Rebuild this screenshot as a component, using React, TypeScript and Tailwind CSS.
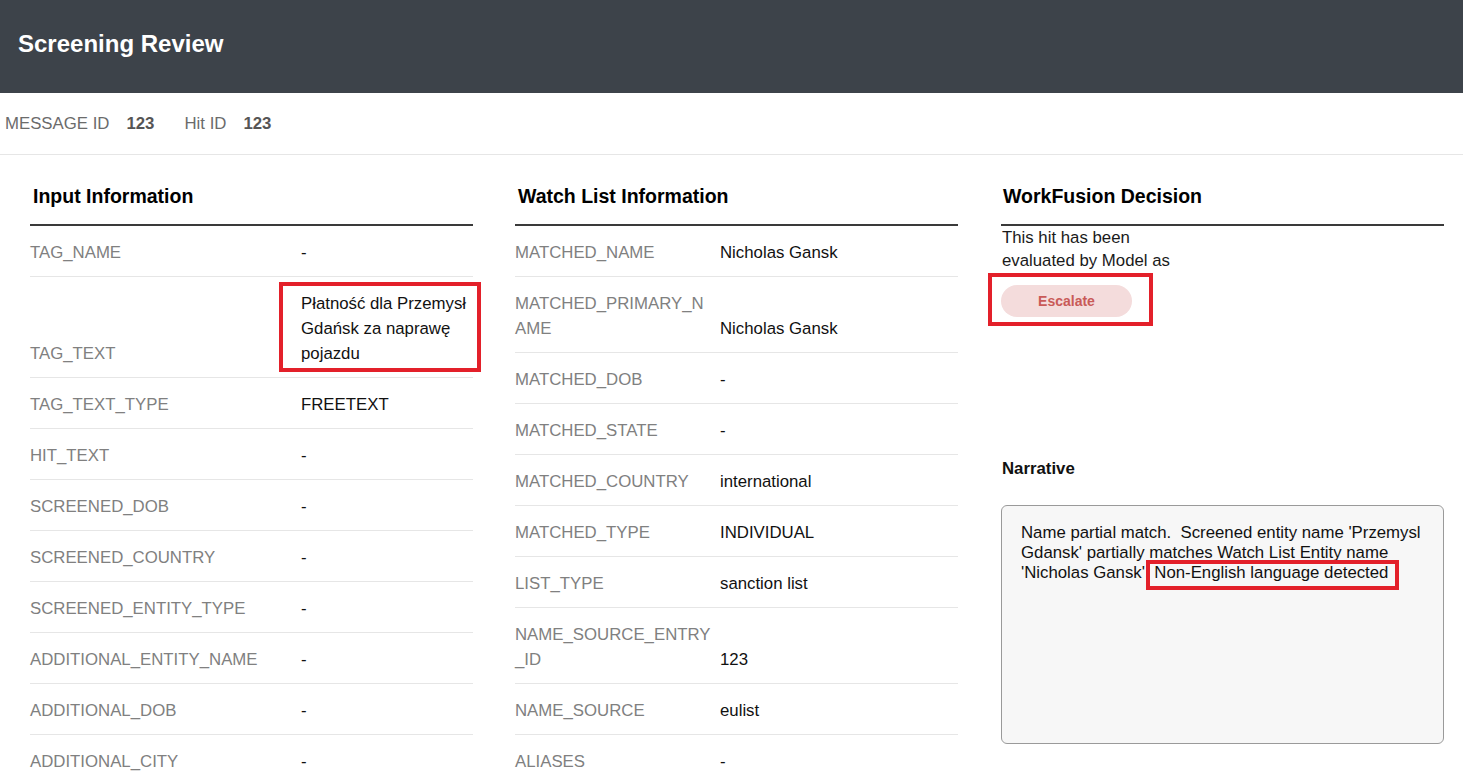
import React from "react";

type Row = { label: string; value: string; mark?: boolean };

const inputRows: Row[] = [
  { label: "TAG_NAME", value: "-" },
  { label: "TAG_TEXT", value: "Płatność dla Przemysł Gdańsk za naprawę pojazdu", mark: true },
  { label: "TAG_TEXT_TYPE", value: "FREETEXT" },
  { label: "HIT_TEXT", value: "-" },
  { label: "SCREENED_DOB", value: "-" },
  { label: "SCREENED_COUNTRY", value: "-" },
  { label: "SCREENED_ENTITY_TYPE", value: "-" },
  { label: "ADDITIONAL_ENTITY_NAME", value: "-" },
  { label: "ADDITIONAL_DOB", value: "-" },
  { label: "ADDITIONAL_CITY", value: "-" },
  { label: "ADDITIONAL_COUNTRY", value: "-" },
];

const watchRows: Row[] = [
  { label: "MATCHED_NAME", value: "Nicholas Gansk" },
  { label: "MATCHED_PRIMARY_NAME", value: "Nicholas Gansk" },
  { label: "MATCHED_DOB", value: "-" },
  { label: "MATCHED_STATE", value: "-" },
  { label: "MATCHED_COUNTRY", value: "international" },
  { label: "MATCHED_TYPE", value: "INDIVIDUAL" },
  { label: "LIST_TYPE", value: "sanction list" },
  { label: "NAME_SOURCE_ENTRY_ID", value: "123" },
  { label: "NAME_SOURCE", value: "eulist" },
  { label: "ALIASES", value: "-" },
  { label: "REMARKS", value: "-" },
];

function Heading({ children }: { children: React.ReactNode }) {
  return (
    <div className="border-b-2 border-[#3a3a3a] pb-[16px] pl-[3px] text-[19.5px] font-bold leading-[24px] text-black">
      {children}
    </div>
  );
}

function InputRow({ row }: { row: Row }) {
  return (
    <div className="flex items-end border-b border-[#e6e6e6] pb-[11px] pt-[14px] text-[16.8px] leading-[25px]">
      <div className="w-[271px] shrink-0 text-[#808080]">{row.label}</div>
      <div className="relative min-w-0 flex-1 text-[#111]">
        {row.value}
        {row.mark && (
          <div className="pointer-events-none absolute -left-[22px] -right-[8px] -top-[9px] -bottom-[6px] border-[4px] border-[#e3202a]" />
        )}
      </div>
    </div>
  );
}

function WatchRow({ row }: { row: Row }) {
  return (
    <div className="flex items-end border-b border-[#e6e6e6] pb-[11px] pt-[14px] text-[16.8px] leading-[25px]">
      <div className="w-[205px] shrink-0 break-all pr-[6px] text-[#808080]">{row.label}</div>
      <div className="min-w-0 flex-1 text-[#111]">{row.value}</div>
    </div>
  );
}

export default function App() {
  return (
    <div className="h-screen overflow-hidden bg-white font-['Liberation_Sans',Arial,sans-serif]">
      <header className="flex h-[93px] items-center bg-[#3d434a] pl-[18px]">
        <h1 className="pb-[6px] text-[24px] font-bold leading-[28px] text-white">Screening Review</h1>
      </header>

      <div className="flex h-[62px] items-center border-b border-[#e6e6e6] pl-[5px] text-[16.8px] text-[#6b6b6b]">
        <span>MESSAGE ID</span>
        <span className="ml-[17px] font-bold text-[#555]">123</span>
        <span className="ml-[30px]">Hit ID</span>
        <span className="ml-[17px] font-bold text-[#555]">123</span>
      </div>

      <main className="flex pl-[30px] pt-[29px]">
        <section className="w-[443px] shrink-0">
          <Heading>Input Information</Heading>
          {inputRows.map((r) => (
            <InputRow key={r.label} row={r} />
          ))}
        </section>

        <section className="ml-[42px] w-[443px] shrink-0">
          <Heading>Watch List Information</Heading>
          {watchRows.map((r) => (
            <WatchRow key={r.label} row={r} />
          ))}
        </section>

        <section className="ml-[43px] w-[443px] shrink-0">
          <div className="border-b-2 border-[#3a3a3a] pb-[16px] pl-[2px] text-[19.5px] font-bold leading-[24px] text-black">
            WorkFusion Decision
          </div>
          <p className="w-[182px] pl-[1px] text-[16.8px] leading-[23px] text-[#1a1a1a]">
            This hit has been evaluated by Model as
          </p>
          <div className="relative mt-[13px] w-[131px]">
            <button className="flex h-[32px] w-[131px] items-center justify-center rounded-full bg-[#f4dcdc] text-[14px] font-bold text-[#c95a58]">
              Escalate
            </button>
            <div className="pointer-events-none absolute -left-[13px] -right-[21px] -top-[12px] -bottom-[9px] border-[4px] border-[#e3202a]" />
          </div>

          <div className="mt-[142px] pl-[1px] text-[16.8px] font-bold leading-[20px] text-[#111]">Narrative</div>

          <div className="mt-[26px] h-[239px] rounded-[6px] border border-[#9a9a9a] bg-[#f7f7f7] px-[19px] pt-[17px]">
            <p className="whitespace-pre-wrap text-[16.8px] leading-[20px] text-[#111]">
              {"Name partial match.  Screened entity name 'Przemysl Gdansk' partially matches Watch List Entity name 'Nicholas Gansk'. "}
              <span className="relative">
                Non-English language detected
                <span className="pointer-events-none absolute -left-[8px] -right-[11px] -top-[3px] -bottom-[8px] border-[4px] border-[#e3202a]" />
              </span>
            </p>
          </div>
        </section>
      </main>
    </div>
  );
}
